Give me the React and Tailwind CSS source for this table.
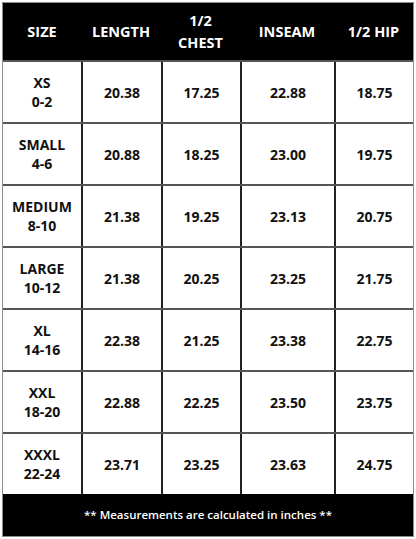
import React from 'react';

const rows = [
  ['XS', '0-2', '20.38', '17.25', '22.88', '18.75'],
  ['SMALL', '4-6', '20.88', '18.25', '23.00', '19.75'],
  ['MEDIUM', '8-10', '21.38', '19.25', '23.13', '20.75'],
  ['LARGE', '10-12', '21.38', '20.25', '23.25', '21.75'],
  ['XL', '14-16', '22.38', '21.25', '23.38', '22.75'],
  ['XXL', '18-20', '22.88', '22.25', '23.50', '23.75'],
  ['XXXL', '22-24', '23.71', '23.25', '23.63', '24.75'],
];

const cols = 'grid grid-cols-[78px_80px_79px_94px_79px]';

const SizeChart = () => {
  return (
    <div className="bg-white min-h-[539px] pt-[2px] pl-[2px]" style={{ fontFamily: '"Open Sans", "Noto Sans", sans-serif' }}>
      <div className="w-[412px] border border-[#8c8c8c]">
        <div className={`${cols} h-[57px] bg-black text-white text-[14.5px] font-bold leading-[22px] text-center items-center`}>
          <div>SIZE</div>
          <div>LENGTH</div>
          <div>1/2<br />CHEST</div>
          <div>INSEAM</div>
          <div>1/2 HIP</div>
        </div>
        {rows.map((r) => (
          <div key={r[0]} className={`${cols} h-[62px] border-t-2 border-[#555] text-[#111] text-[14px] font-bold text-center`}>
            <div className="flex flex-col items-center justify-center leading-[19px]">
              <span>{r[0]}</span>
              <span>{r[1]}</span>
            </div>
            <div className="flex items-center justify-center border-l-2 border-[#222]">{r[2]}</div>
            <div className="flex items-center justify-center border-l-2 border-[#222]">{r[3]}</div>
            <div className="flex items-center justify-center border-l-2 border-[#222]">{r[4]}</div>
            <div className="flex items-center justify-center border-l-2 border-[#222]">{r[5]}</div>
          </div>
        ))}
        <div className="h-[42px] bg-black text-white text-[11.5px] font-semibold flex items-center justify-center">
          ** Measurements are calculated in inches **
        </div>
      </div>
    </div>
  );
};

export default function App() {
  return <SizeChart />;
}
